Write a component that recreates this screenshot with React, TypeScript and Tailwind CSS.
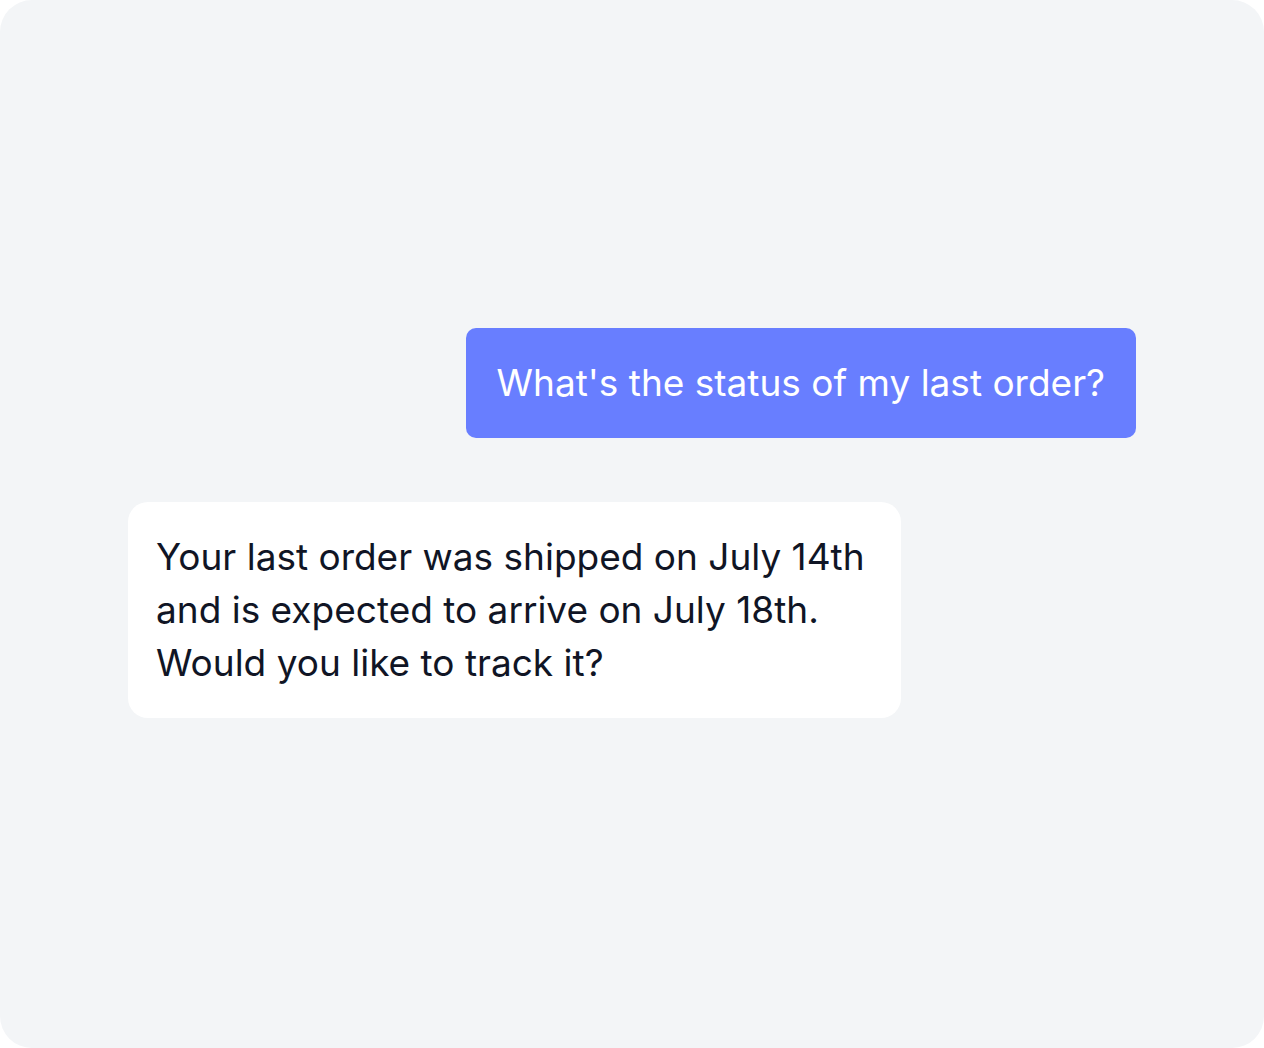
export default function App() {
  return (
    <main className="flex min-h-screen flex-col justify-center gap-16 rounded-[32px] bg-[#f3f5f7] px-32 pb-0.5 font-['Inter',sans-serif] text-[37px] leading-[53px] text-[#101525]">
      <p className="max-w-full self-end rounded-[10px] bg-[#687eff] px-[31px] pt-7 pb-[29px] text-white">
        What's the status of my last order?
      </p>
      <p className="max-w-[773px] self-start rounded-[20px] bg-white px-7 pt-7 pb-[29px]">
        Your last order was shipped on July 14th and is expected to arrive on July 18th. Would you like to track it?
      </p>
    </main>
  );
}
